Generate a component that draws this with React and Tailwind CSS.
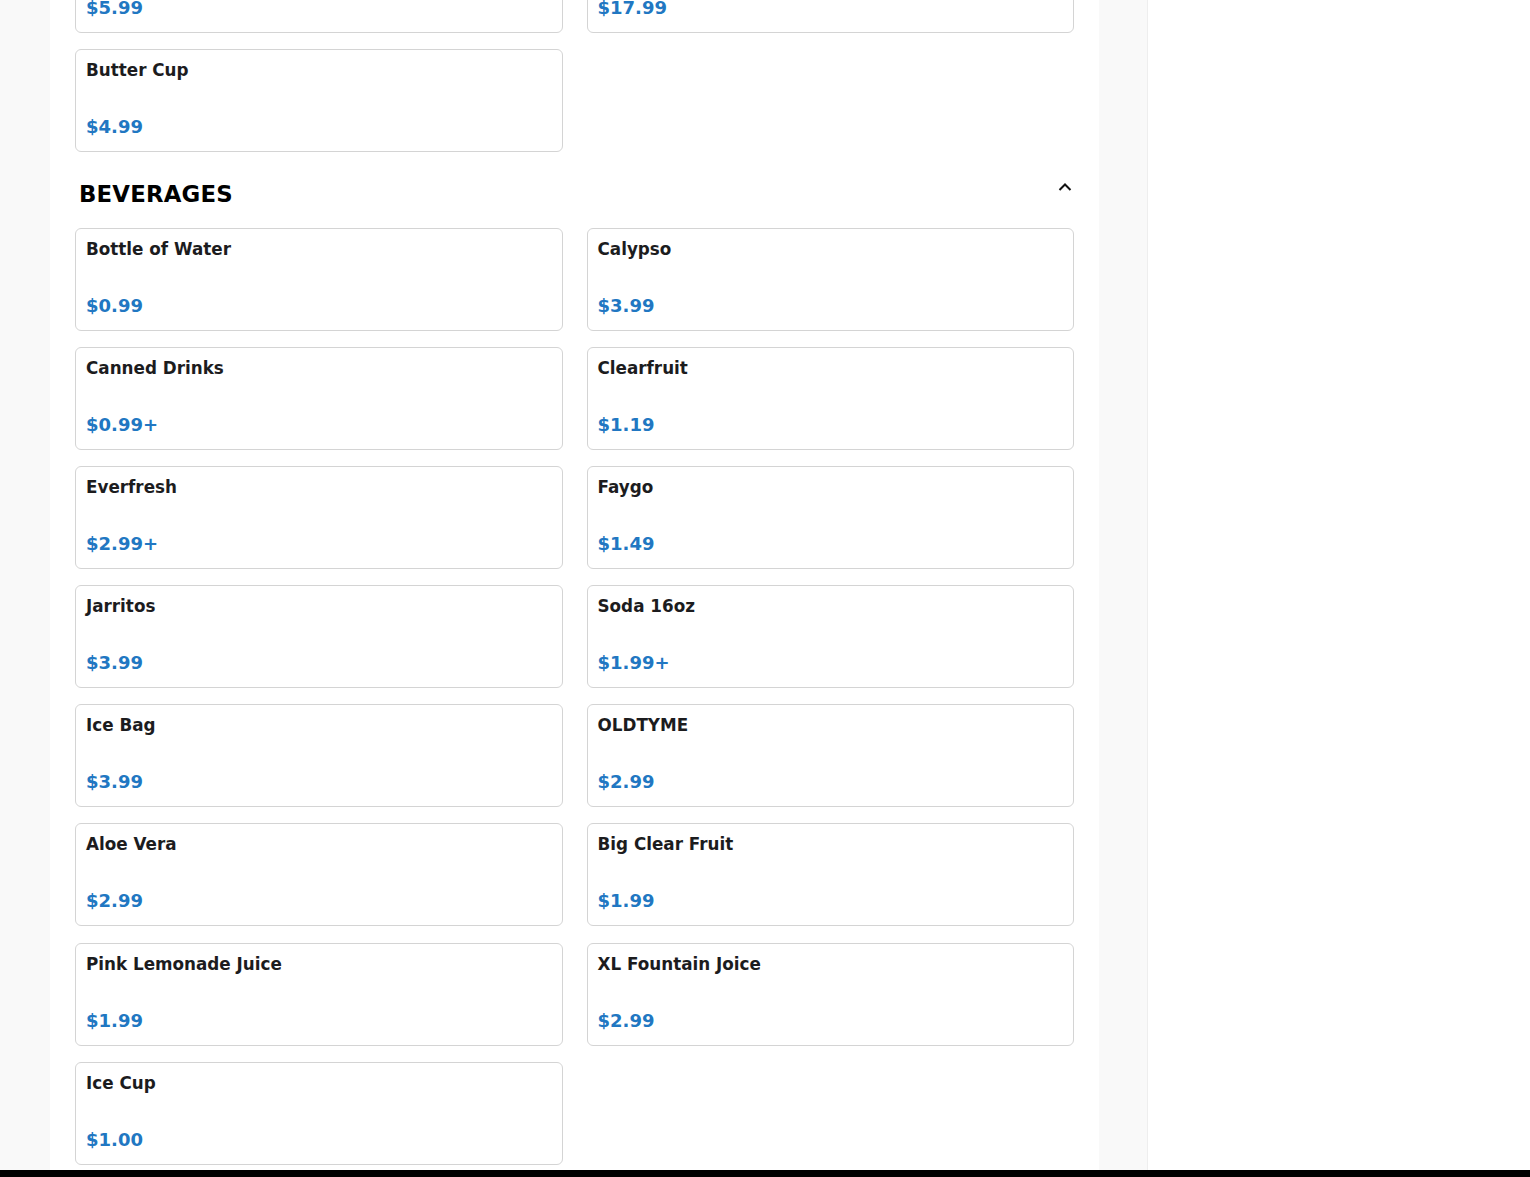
import React from "react";

const font = { fontFamily: '"DejaVu Sans", "Liberation Sans", sans-serif' };

// 上一分类末尾（页面已向下滚动）
const topItems = [
  { name: "Peanut Cup", price: "$5.99" },
  { name: "Family Pack", price: "$17.99" },
  { name: "Butter Cup", price: "$4.99" },
];

const beverages = [
  { name: "Bottle of Water", price: "$0.99" },
  { name: "Calypso", price: "$3.99" },
  { name: "Canned Drinks", price: "$0.99+" },
  { name: "Clearfruit", price: "$1.19" },
  { name: "Everfresh", price: "$2.99+" },
  { name: "Faygo", price: "$1.49" },
  { name: "Jarritos", price: "$3.99" },
  { name: "Soda 16oz", price: "$1.99+" },
  { name: "Ice Bag", price: "$3.99" },
  { name: "OLDTYME", price: "$2.99" },
  { name: "Aloe Vera", price: "$2.99" },
  { name: "Big Clear Fruit", price: "$1.99" },
  { name: "Pink Lemonade Juice", price: "$1.99" },
  { name: "XL Fountain Joice", price: "$2.99" },
  { name: "Ice Cup", price: "$1.00" },
];

function ItemCard({ item }) {
  return (
    <div className="h-[103px] border border-[#d4d4d4] rounded-[6px] bg-white pl-[10px] pr-[10px] pt-[8px] pb-[13px] flex flex-col justify-between cursor-pointer">
      <div className="text-[16.8px] font-bold text-[#1c1c1e] leading-[24px]">{item.name}</div>
      <div className="text-[18px] font-bold text-[#2177c2] leading-[22px]">{item.price}</div>
    </div>
  );
}

export default function App() {
  return (
    <div className="h-[1177px] flex flex-col bg-white overflow-hidden" style={font}>
      <div className="flex flex-1 overflow-hidden">
        {/* 左侧空白 */}
        <div className="w-[50px] bg-[#f9f9f9]"></div>

        {/* 菜单区域 */}
        <div className="w-[1049px] bg-white px-[25px]">
          <div className="-mt-[70px] grid grid-cols-2 gap-x-[24px] gap-y-[16px]">
            {topItems.map((item) => (
              <ItemCard key={item.name} item={item} />
            ))}
          </div>

          <div className="mt-[26px] mb-[18px] flex justify-between items-start pl-[4px] pr-[1px]">
            <h2 className="text-[22.8px] font-bold text-black leading-[32px] tracking-[0.2px]">BEVERAGES</h2>
            <svg width="16" height="16" viewBox="0 0 16 16" className="mt-[1px]" fill="none">
              <path d="M2.5 11 L8 5.5 L13.5 11" stroke="#111" strokeWidth="2" />
            </svg>
          </div>

          <div className="grid grid-cols-2 gap-x-[24px] gap-y-[16.1px]">
            {beverages.map((item) => (
              <ItemCard key={item.name} item={item} />
            ))}
          </div>
        </div>

        <div className="w-[48px] bg-[#f9f9f9]"></div>

        {/* 右侧购物车面板 */}
        <div className="flex-1 bg-white border-l border-[#eeeeee]"></div>
      </div>
      <div className="h-[7px] bg-black"></div>
    </div>
  );
}
